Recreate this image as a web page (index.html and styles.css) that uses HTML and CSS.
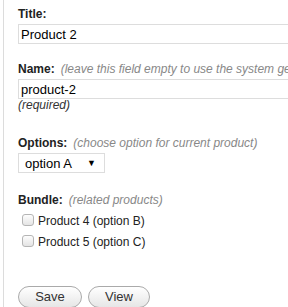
FILE: index.html
```html
<!DOCTYPE html>
<html>
<head>
<meta charset="utf-8">
<title>Edit product</title>
<link rel="stylesheet" href="styles.css">
</head>
<body>
<div id="panel">
<form id="productform">
	<div class="field" id="titlefield">
		<div class="label">Title:</div>
		<input class="text" type="text" value="Product 2">
	</div>

	<div class="field" id="namefield">
		<div class="label">Name:<span class="hint">(leave this field empty to use the system generated name)</span></div>
		<input class="text" type="text" value="product-2">
		<div class="required">(required)</div>
	</div>

	<div class="field" id="optionsfield">
		<div class="label">Options:<span class="hint">(choose option for current product)</span></div>
		<div class="select"><span>option A</span><span class="arrow">&#9660;</span></div>
	</div>

	<div class="field" id="bundlefield">
		<div class="label">Bundle:<span class="hint">(related products)</span></div>
		<label class="check"><span class="box"></span>Product 4 (option B)</label>
		<label class="check"><span class="box"></span>Product 5 (option C)</label>
	</div>

	<div id="buttons">
		<button type="button" class="btn save">Save</button>
		<button type="button" class="btn view">View</button>
	</div>
</form>
</div>
</body>
</html>
```

FILE: styles.css
```css
html, body {
	margin: 0;
	background: white;
	overflow: hidden;
	font-family: "Liberation Sans", Arial, sans-serif;
	color: #222;
}
#panel {
	margin-left: 3px;
	border-left: 1px solid #dcdcdc;
	min-height: 100vh;
	padding-left: 14px;
	box-sizing: border-box;
}
#productform {
	padding-top: 6px;
}
.label {
	font-size: 12px;
	font-weight: bold;
	line-height: 16px;
	margin-bottom: 2px;
	white-space: nowrap;
	color: #222;
}
.hint {
	font-weight: normal;
	font-style: italic;
	color: #888;
	margin-left: 6px;
}
.text {
	display: block;
	width: 400px;
	height: 20px;
	box-sizing: border-box;
	border: 1px solid #ddd;
	padding: 0 2px;
	margin: 0;
	font-family: "Liberation Sans", Arial, sans-serif;
	font-size: 13px;
	color: #000;
	outline: none;
}
#titlefield {
	margin-bottom: 17px;
}
.required {
	font-size: 12px;
	font-style: italic;
	line-height: 13px;
	color: #333;
}
#namefield {
	margin-bottom: 23px;
}
.select {
	display: flex;
	justify-content: space-between;
	align-items: center;
	width: 87px;
	height: 20px;
	box-sizing: border-box;
	border: 1px solid #ddd;
	padding: 0 8px 0 6px;
	font-size: 13px;
	color: #000;
}
.arrow {
	font-size: 9px;
}
#optionsfield {
	margin-bottom: 19px;
}
.check {
	display: flex;
	align-items: center;
	height: 21px;
	font-size: 12px;
	color: #222;
}
.box {
	width: 12px;
	height: 12px;
	box-sizing: border-box;
	border: 1px solid #b5b5b5;
	border-radius: 3px;
	background: linear-gradient(#fdfdfd, #e4e4e4);
	margin: 0 4px 2px 4px;
}
#buttons {
	margin-top: 34px;
	display: flex;
	gap: 6px;
}
.btn {
	height: 22px;
	border: 1px solid #aaa;
	border-radius: 11px;
	background: linear-gradient(#ffffff, #e6e6e6);
	font-family: "Liberation Sans", Arial, sans-serif;
	font-size: 13px;
	color: #333;
	padding: 0;
	line-height: 20px;
}
.save {
	width: 64px;
}
.view {
	width: 62px;
}
```
